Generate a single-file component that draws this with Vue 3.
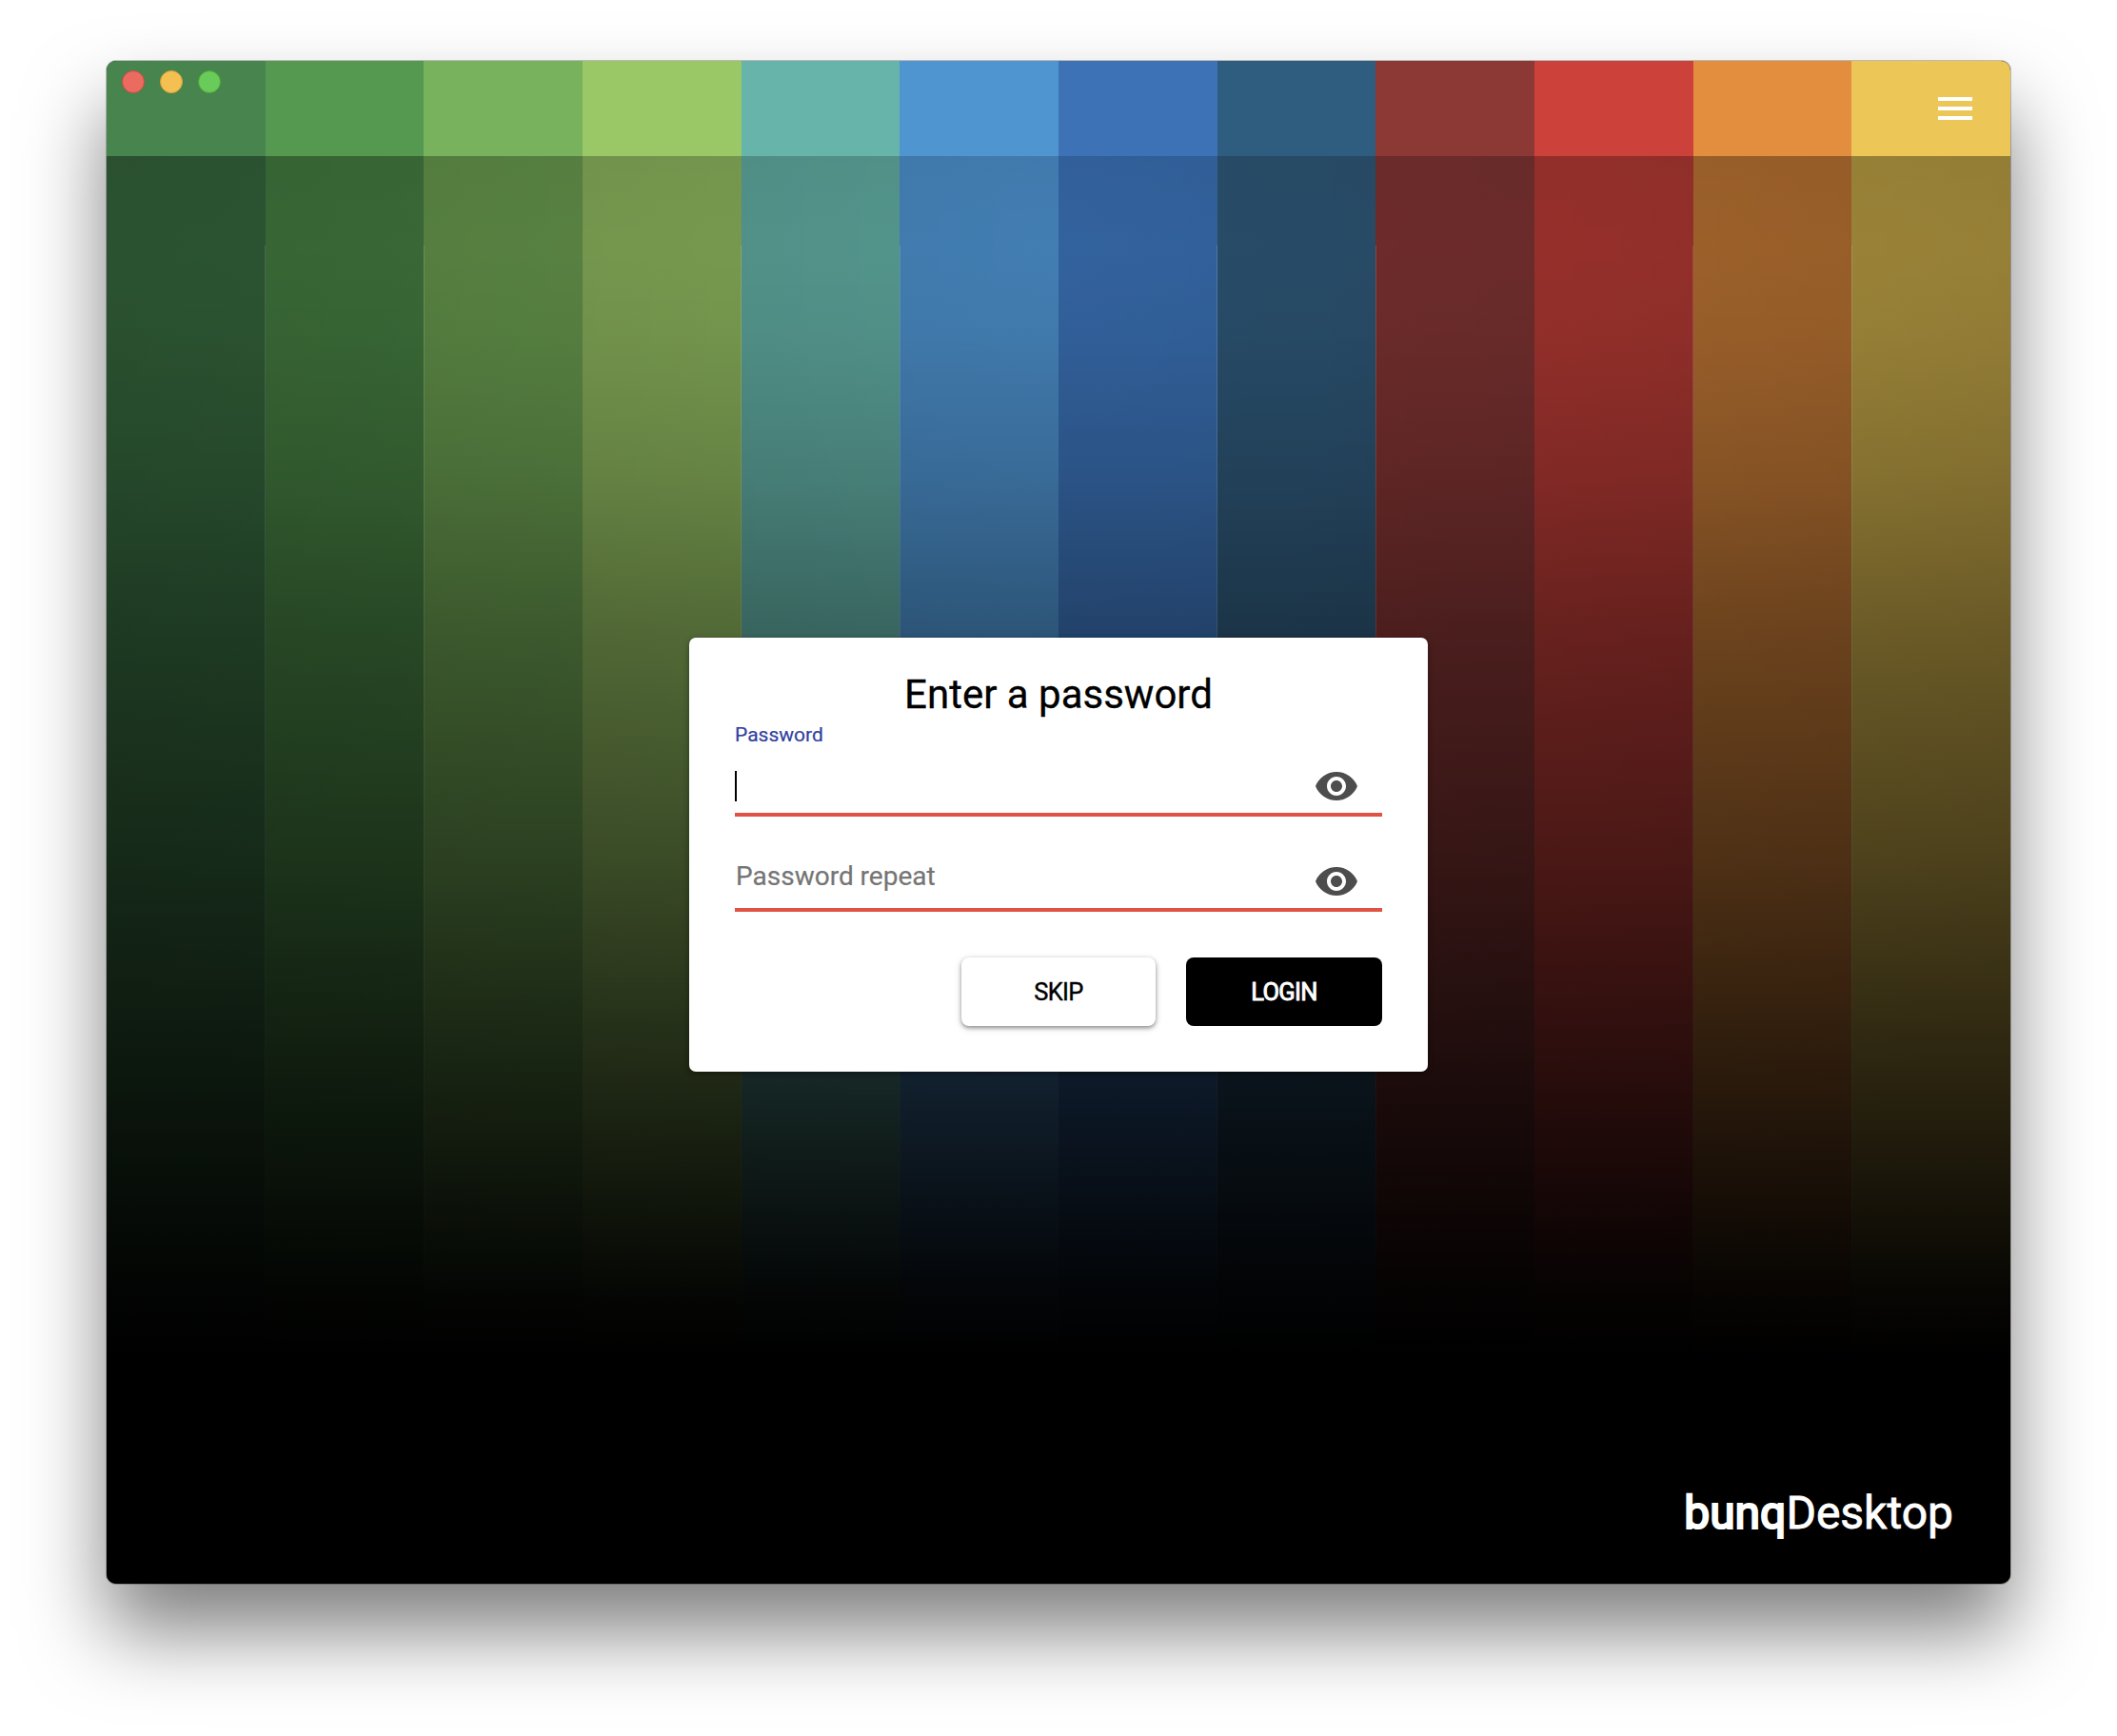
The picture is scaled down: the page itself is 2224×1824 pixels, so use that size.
<script setup>
import { ref } from 'vue'

const stripes = [
  { bar: '#48844e', body: '#305d37' },
  { bar: '#559950', body: '#3e713a' },
  { bar: '#79b25d', body: '#5d8a46' },
  { bar: '#9ac866', body: '#7ca052' },
  { bar: '#66b4aa', body: '#55988f' },
  { bar: '#4f95d0', body: '#437fb4' },
  { bar: '#3e72b7', body: '#33639f' },
  { bar: '#2f5d80', body: '#294e6b' },
  { bar: '#8c3835', body: '#722e2d' },
  { bar: '#cd413b', body: '#a0332e' },
  { bar: '#e38d3f', body: '#aa692e' },
  { bar: '#ecc757', body: '#ab913e' }
]

const fields = [
  { id: 'password', label: 'Password', focused: true },
  { id: 'repeat', label: 'Password repeat', focused: false }
]

const visible = ref({ password: false, repeat: false })
const toggle = (id) => {
  visible.value[id] = !visible.value[id]
}
</script>

<template>
  <div class="desktop">
    <div class="window">
      <header class="bar">
        <div class="stripes">
          <i v-for="s in stripes" :key="s.bar" :style="{ background: s.bar }"></i>
        </div>
        <div class="lights"><b class="close"></b><b class="min"></b><b class="max"></b></div>
        <svg class="menu" viewBox="0 0 24 24"><path d="M3 18h18v-2H3v2zm0-5h18v-2H3v2zm0-7v2h18V6H3z" /></svg>
      </header>
      <main class="body">
        <div class="stripes shaded">
          <i v-for="s in stripes" :key="s.body" :style="{ background: s.body }"></i>
        </div>
        <section class="card">
          <h1>Enter a password</h1>
          <div v-for="f in fields" :key="f.id" class="field" :class="{ focused: f.focused }">
            <label>{{ f.label }}</label>
            <span v-if="f.focused" class="caret"></span>
            <svg class="eye" viewBox="0 0 24 24" @click="toggle(f.id)">
              <path d="M12 4.5C7 4.5 2.73 7.61 1 12c1.73 4.39 6 7.5 11 7.5s9.27-3.11 11-7.5c-1.73-4.39-6-7.5-11-7.5zM12 17c-2.76 0-5-2.24-5-5s2.24-5 5-5 5 2.24 5 5-2.24 5-5 5zm0-8c-1.66 0-3 1.34-3 3s1.34 3 3 3 3-1.34 3-3-1.34-3-3-3z" />
            </svg>
          </div>
          <div class="actions">
            <button class="skip">SKIP</button>
            <button class="login">LOGIN</button>
          </div>
        </section>
        <div class="brand"><strong>bunq</strong>Desktop</div>
      </main>
    </div>
  </div>
</template>

<style>
body {
  background: #fff;
}
</style>

<style scoped>
.desktop {
  box-sizing: border-box;
  width: 2224px;
  height: 1824px;
  padding: 64px 112px 0;
  overflow: hidden;
  background: #fff;
  font-family: Roboto, "Liberation Sans", sans-serif;
}
.window {
  width: 2000px;
  height: 1600px;
  display: flex;
  flex-direction: column;
  border-radius: 10px;
  overflow: hidden;
  background: #000;
  box-shadow: 0 0 0 1px rgba(0, 0, 0, 0.23), 0 50px 84px rgba(0, 0, 0, 0.5);
}
.bar {
  position: relative;
  box-sizing: border-box;
  height: 100px;
  display: flex;
  justify-content: space-between;
  padding: 10px 34px 0 16px;
}
.stripes {
  position: absolute;
  inset: 0;
  display: flex;
}
.stripes i {
  flex: 1;
}
.lights {
  position: relative;
  display: flex;
  gap: 16px;
}
.lights b {
  box-sizing: border-box;
  width: 24px;
  height: 24px;
  border-radius: 50%;
}
.close {
  background: #ec6b60;
  border: 1px solid #cf4b3f;
}
.min {
  background: #f5c052;
  border: 1px solid #d9a03a;
}
.max {
  background: #69cb59;
  border: 1px solid #4da63a;
}
.menu {
  position: relative;
  width: 48px;
  height: 48px;
  margin-top: 16px;
  fill: #fff;
}
.body {
  position: relative;
  flex: 1;
  display: flex;
  flex-direction: column;
  align-items: center;
}
.shaded {
  isolation: isolate;
}
.shaded::after {
  content: "";
  position: absolute;
  inset: 0;
  z-index: 2;
  background:
    radial-gradient(ellipse 1150px 1400px at 50% 96px, transparent 0, rgba(0, 0, 0, 0.13) 100%),
    linear-gradient(rgba(0, 0, 0, 0.03) 0, rgba(0, 0, 0, 0.01) 96px, rgba(0, 0, 0, 0.04) 186px, rgba(0, 0, 0, 0.14) 336px, rgba(0, 0, 0, 0.3) 496px, rgba(0, 0, 0, 0.49) 736px, rgba(0, 0, 0, 0.69) 936px, rgba(0, 0, 0, 0.84) 1086px, rgba(0, 0, 0, 0.95) 1190px, #000 1260px);
}
.shaded i {
  position: relative;
}
.shaded i:not(:nth-child(3n))::after {
  content: "";
  position: absolute;
  z-index: 1;
  top: 94px;
  right: 0;
  bottom: 0;
  width: 1px;
  background: rgba(255, 255, 255, 0.15);
}
.shaded i:nth-child(3n + 2)::after {
  right: -1px;
}
.card {
  position: relative;
  box-sizing: border-box;
  width: 776px;
  height: 456px;
  margin-top: 506px;
  padding: 35px 48px 0;
  border-radius: 7px;
  background: #fff;
  box-shadow: 0 2px 6px rgba(0, 0, 0, 0.4);
}
h1 {
  margin: 0;
  height: 49px;
  line-height: 50px;
  font-size: 42px;
  font-weight: 400;
  text-align: center;
  color: #000;
  -webkit-text-stroke: 0.3px #000;
}
.field {
  position: relative;
  box-sizing: border-box;
  width: 680px;
  height: 100px;
  border-bottom: 4px solid #e05244;
}
.field.focused {
  height: 104px;
}
.field label {
  display: block;
  padding: 46px 0 0 1px;
  line-height: 34px;
  font-size: 28px;
  color: #757575;
  -webkit-text-stroke: 0.2px currentColor;
}
.field.focused label {
  padding: 5px 0 0;
  line-height: 26px;
  font-size: 21px;
  color: #303f9f;
}
.caret {
  display: block;
  width: 2px;
  height: 32px;
  margin-top: 25px;
  background: #000;
}
.eye {
  position: absolute;
  right: 24px;
  bottom: 4px;
  width: 48px;
  height: 48px;
  fill: #4d4d4d;
}
.actions {
  display: flex;
  justify-content: flex-end;
  gap: 32px;
  margin-top: 48px;
}
button {
  width: 204px;
  height: 72px;
  padding: 0;
  border: 0;
  border-radius: 8px;
  font-family: inherit;
  font-size: 25.5px;
  font-weight: 400;
  letter-spacing: -0.7px;
  line-height: 72px;
  background: #fff;
  color: #000;
  -webkit-text-stroke: 0.4px currentColor;
}
.skip {
  box-shadow: 0 2px 4px rgba(0, 0, 0, 0.38), 0 2px 8px rgba(0, 0, 0, 0.14);
}
.login {
  width: 206px;
  background: #000;
  color: #fff;
  -webkit-text-stroke: 0.9px currentColor;
}
.brand {
  position: relative;
  align-self: flex-end;
  margin: auto 60px 46px 0;
  line-height: 56px;
  font-size: 48px;
  color: #fff;
  -webkit-text-stroke: 0.8px #fff;
}
.brand strong {
  font-weight: 400;
  -webkit-text-stroke: 2.2px #fff;
}
</style>
